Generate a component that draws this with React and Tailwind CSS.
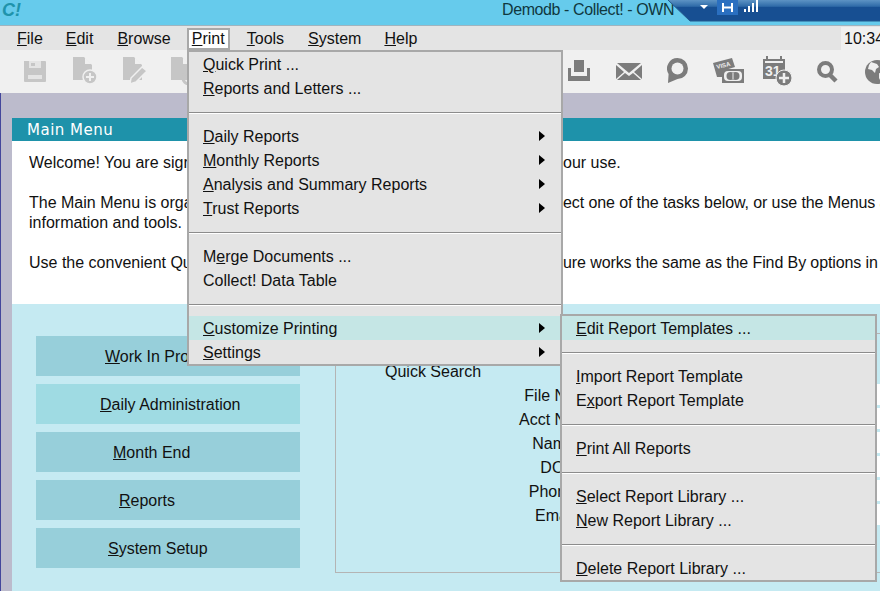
const font = 'font-["Liberation_Sans",Arial,sans-serif]'

const printMenu = [
  ['', 'Q', 'uick Print ...'],
  ['', 'R', 'eports and Letters ...'],
  null,
  ['', 'D', 'aily Reports', true],
  ['', 'M', 'onthly Reports', true],
  ['', 'A', 'nalysis and Summary Reports', true],
  ['', 'T', 'rust Reports', true],
  null,
  ['M', 'e', 'rge Documents ...'],
  ['', '', 'Collect! Data Table'],
  null,
  ['', 'C', 'ustomize Printing', true, true],
  ['', 'S', 'ettings', true],
]

const reportMenu = [
  ['', 'E', 'dit Report Templates ...', false, true],
  null,
  ['', 'I', 'mport Report Template'],
  ['E', 'x', 'port Report Template'],
  null,
  ['', 'P', 'rint All Reports'],
  null,
  ['', 'S', 'elect Report Library ...'],
  ['', 'N', 'ew Report Library ...'],
  null,
  ['', 'D', 'elete Report Library ...'],
]

const topMenu = [
  ['F', 'ile', 'ml-[17px]'],
  ['E', 'dit', 'ml-[23px]'],
  ['B', 'rowse', 'ml-[24px]'],
]

const topMenu2 = [
  ['T', 'ools', 'ml-[17px]'],
  ['S', 'ystem', 'ml-6'],
  ['H', 'elp', 'ml-[23px]'],
]

const buttons = [
  ['W', 'ork In Process', 'pl-[69px]', 'bg-[#97cfda]'],
  ['D', 'aily Administration', 'pl-[64px]', 'bg-[#9fdbe3]'],
  ['M', 'onth End', 'pl-[77px]', 'bg-[#97cfda]'],
  ['R', 'eports', 'pl-[83px]', 'bg-[#97cfda]'],
  ['S', 'ystem Setup', 'pl-[72px]', 'bg-[#97cfda]'],
]

const searchRows = ['File No', 'Acct No', 'Name', 'DOB', 'Phone', 'Email']

function MenuRow({ item }) {
  const [before, key, rest, sub, active] = item
  return (
    <div className={`flex h-6 items-center justify-between pl-[14px] pr-4 leading-6 ${active ? 'bg-[#c5e6e5]' : ''}`}>
      <span className="translate-y-px">
        {before}
        {key && <u>{key}</u>}
        {rest}
      </span>
      {sub && <span className="h-0 w-0 border-y-[5px] border-l-[6px] border-y-transparent border-l-black" />}
    </div>
  )
}

function Separator() {
  return (
    <div className="flex h-6 items-center pt-[2px]">
      <div className="h-[2px] w-full border-t border-[#8c8c8c] bg-white" />
    </div>
  )
}

function Menu({ items, className }) {
  return (
    <div className={`absolute border-2 border-[#a8a8a8] bg-[#e4e4e4] text-[16px] text-[#111] ${className}`}>
      {items.map((item, i) => item ? <MenuRow key={i} item={item} /> : <Separator key={i} />)}
    </div>
  )
}

function Floppy() {
  return (
    <svg width="22" height="22" viewBox="0 0 22 22" className="ml-[24px] mt-[10px] shrink-0" fill="#c6c6c6">
      <path d="M0 1h21a1 1 0 0 1 1 1v19a1 1 0 0 1-1 1H1a1 1 0 0 1-1-1z" />
      <path d="M5 1h12v7H5z" fill="#e4e4e4" />
      <path d="M7 3h4v3H7z" />
      <path d="M4 15h14v4H4z" fill="#e4e4e4" />
    </svg>
  )
}

function DocShape() {
  return <path d="M0 0h11l8 8v15H0zM12 1v6h6z" fillRule="evenodd" />
}

function DocPlus() {
  return (
    <svg width="24" height="27" viewBox="0 0 24 27" className="ml-[27px] mt-[7px] shrink-0" fill="#c6c6c6">
      <DocShape />
      <circle cx="17" cy="20" r="7" stroke="#f0f0f0" strokeWidth="1.5" />
      <path d="M13 20h8M17 16v8" stroke="#f0f0f0" strokeWidth="2" />
    </svg>
  )
}

function DocPencil() {
  return (
    <svg width="25" height="28" viewBox="0 0 25 28" className="ml-[26px] mt-[7px] shrink-0" fill="#c6c6c6">
      <DocShape />
      <path d="M19 10l5 4-11 11-6 2 1-6z" stroke="#f0f0f0" strokeWidth="1.5" />
    </svg>
  )
}

function DocCopy() {
  return (
    <svg width="25" height="28" viewBox="0 0 25 28" className="ml-[23px] mt-[7px] shrink-0" fill="#c6c6c6">
      <DocShape />
      <circle cx="18" cy="21" r="6" fill="none" stroke="#c6c6c6" strokeWidth="3" />
    </svg>
  )
}

function Tray() {
  return (
    <svg width="22" height="21" viewBox="0 0 22 21" className="shrink-0" fill="#7c7c7c">
      <path d="M6 0h10v12H6z" />
      <path d="M0 8h3v8h16V8h3v13H0z" />
    </svg>
  )
}

function Mail() {
  return (
    <svg width="26" height="17" viewBox="0 0 26 17" className="ml-[26px] mt-[3px] shrink-0" fill="#7c7c7c">
      <path d="M1 0h24L13 10z" />
      <path d="M0 2l8 7-8 7zM26 2v14l-8-7zM9 10l4 3 4-3 8 7H1z" />
    </svg>
  )
}

function Pin() {
  return (
    <svg width="21" height="25" viewBox="0 0 21 25" className="ml-[25px] mt-[-2px] shrink-0" fill="none">
      <path d="M10.5 0A10.5 10.5 0 0 1 10.5 21L1 25l.6-9A10.5 10.5 0 0 1 10.5 0z" fill="#7c7c7c" />
      <circle cx="10.5" cy="10.5" r="6" fill="#f0f0f0" />
    </svg>
  )
}

function Visa() {
  return (
    <svg width="31" height="25" viewBox="0 0 31 25" className="ml-[25px] mt-[-2px] shrink-0">
      <path d="M0 5l19-5 3 9-10 3v7H4z" fill="#7c7c7c" />
      <text x="4" y="11" fontSize="6" fontWeight="700" fill="#f0f0f0" transform="rotate(-14 4 11)" fontFamily="Liberation Sans">VISA</text>
      <rect x="9" y="11" width="22" height="14" fill="#7c7c7c" />
      <rect x="11" y="13" width="18" height="10" rx="4" fill="#f0f0f0" />
      <circle cx="17.5" cy="18" r="4" fill="#7c7c7c" />
      <circle cx="22.5" cy="18" r="4" fill="#7c7c7c" />
      <path d="M20 15v6" stroke="#f0f0f0" />
    </svg>
  )
}

function CalendarPlus() {
  return (
    <svg width="29" height="30" viewBox="0 0 29 30" className="ml-[19px] mt-[-4px] shrink-0">
      <path d="M0 3h3V0h2v3h12V0h2v3h3v20H0z" fill="#7c7c7c" />
      <path d="M2 5h18v2H2z" fill="#f0f0f0" />
      <text x="2" y="20" fontSize="14" fontWeight="700" fill="#f0f0f0" fontFamily="Liberation Sans">31</text>
      <circle cx="21" cy="22" r="8" fill="#7c7c7c" stroke="#f0f0f0" />
      <path d="M16 22h10M21 17v10" stroke="#f0f0f0" strokeWidth="2.5" />
    </svg>
  )
}

function Search() {
  return (
    <svg width="21" height="22" viewBox="0 0 21 22" className="ml-[25px] mt-[1px] shrink-0" fill="none" stroke="#7c7c7c">
      <circle cx="8.5" cy="8.5" r="6.5" strokeWidth="4" />
      <path d="M13 14l6 6" strokeWidth="4.5" />
    </svg>
  )
}

function Globe() {
  return (
    <svg width="24" height="24" viewBox="0 0 24 24" className="ml-[27px] shrink-0">
      <circle cx="12" cy="12" r="12" fill="#7c7c7c" />
      <path d="M6 2l6 2 2 3-3 2-1 4-3-3-4-1 1-4zM14 13l5 1 1 3-4 5-2-4z" fill="#f0f0f0" />
    </svg>
  )
}

function ConnectionBar() {
  return (
    <div className="absolute left-[668px] top-0 h-[22px] w-[212px]">
      <svg width="212" height="22" viewBox="0 0 212 22" className="block">
        <defs>
          <linearGradient id="bar" x1="0" y1="0" x2="0" y2="1">
            <stop offset="0" stopColor="#5d93c4" />
            <stop offset="0.3" stopColor="#2f6ba8" />
            <stop offset="0.35" stopColor="#174f92" />
            <stop offset="1" stopColor="#174f92" />
          </linearGradient>
        </defs>
        <path d="M0 0h212v21H22z" fill="url(#bar)" />
        <path d="M0 0l22 21h190" fill="none" stroke="#23598c" />
        <path d="M32 5h8l-4 4z" fill="#fff" />
        <rect x="49" y="0" width="21" height="15" fill="#2a6fc0" />
        <path d="M55 3v9M64 3v9M55 7.500h9" stroke="#fff" strokeWidth="2" />
        <path d="M76 9h2v3h-2zM80 6h2v6h-2zM84 3h2v9h-2zM88 0h2v12h-2z" fill="#fff" />
      </svg>
    </div>
  )
}

export default function App() {
  return (
    <div className={`relative h-[591px] w-[880px] overflow-hidden bg-[#c5eaf2] text-[16px] leading-5 text-[#111] ${font}`}>
      {/* Title bar */}
      <div className="flex h-[26px] items-start border-b border-[#9fb4bf] bg-[#66cbec]">
        <span className="ml-[2px] text-[18px] font-bold italic leading-[20px] text-[#1f93ab]">C!</span>
        <span className="ml-[481px] whitespace-nowrap tracking-[-0.4px] text-[#10383f]">Demodb - Collect! - OWN</span>
      </div>
      <ConnectionBar />

      {/* Menu bar */}
      <div className="flex h-6 items-center bg-[#e4e4e4] pt-[2px]">
        {topMenu.map(([key, rest, cls]) => (
          <span key={key} className={cls}><u>{key}</u>{rest}</span>
        ))}
        <span className="ml-4 flex h-[22px] w-[43px] items-center justify-center border-2 border-[#a8a8a8] bg-white">
          <span><u>P</u>rint</span>
        </span>
        {topMenu2.map(([key, rest, cls]) => (
          <span key={key} className={cls}><u>{key}</u>{rest}</span>
        ))}
        <span className="ml-auto -mt-px flex w-[39px] items-center self-stretch overflow-hidden whitespace-nowrap bg-[#f0f0f0] pl-[3px]">10:34</span>
      </div>

      {/* Toolbar */}
      <div className="flex h-[43px] items-start bg-[#f0f0f0]">
        <Floppy />
        <DocPlus />
        <DocPencil />
        <DocCopy />
        <div className="ml-[372px] mt-[10px] flex shrink-0 items-start">
          <Tray />
          <Mail />
          <Pin />
          <Visa />
          <CalendarPlus />
          <Search />
          <Globe />
        </div>
      </div>

      {/* Main area */}
      <div className="h-[498px] border-l border-[#44479c] bg-[#bcbbcc] pl-[11px] pt-[25px]">
        <div className="w-[900px]">
          <div className="flex h-[23px] items-center bg-[#1e92aa] pl-[15px] font-['DejaVu_Sans',sans-serif] text-[15px] tracking-[0.5px] text-white">Main Menu</div>
          <div className="h-[163px] whitespace-nowrap bg-white pl-[17px] pt-3">
            <div className="flex">
              <span className="w-[534px] shrink-0 overflow-hidden">Welcome! You are signed in and the Main Menu is ready for y</span>
              <span>our use.</span>
            </div>
            <div className="mt-5 flex">
              <span className="w-[534px] shrink-0 overflow-hidden">The Main Menu is organized by task. To get started, sel</span>
              <span className="tracking-[-0.1px]">ect one of the tasks below, or use the Menus at the top for more</span>
            </div>
            <div>information and tools.</div>
            <div className="mt-5 flex">
              <span className="w-[534px] shrink-0 overflow-hidden">Use the convenient Quick Search. This feat</span>
              <span className="tracking-[-0.1px]">ure works the same as the Find By options in the Browse menu.</span>
            </div>
          </div>
          <div className="flex h-[287px] items-start bg-[#c5eaf2] pl-6 pt-[29px]">
            <div className="mt-[3px] flex w-[264px] shrink-0 flex-col gap-2">
              {buttons.map(([key, rest, pad, bg]) => (
                <div key={key} className={`flex h-10 items-center ${pad} ${bg}`}>
                  <span className="mt-[2px]"><u>{key}</u>{rest}</span>
                </div>
              ))}
            </div>
            <div className="ml-[35px] h-[240px] w-[565px] shrink-0 border border-[#b4b4b4] pt-7">
              <div className="mb-[2px] pl-[49px]">Quick Search</div>
              {searchRows.map(label => (
                <div key={label} className="flex h-6">
                  <span className="w-[239px] text-right leading-6">{label}</span>
                  <span className="ml-[5px] h-[21px] w-[300px] bg-white" />
                </div>
              ))}
            </div>
          </div>
        </div>
      </div>

      {/* Open menus */}
      <Menu items={printMenu} className="left-[187px] top-[50px] w-[376px]" />
      <Menu items={reportMenu} className="left-[560px] top-[314px] w-[317px]" />
    </div>
  )
}
